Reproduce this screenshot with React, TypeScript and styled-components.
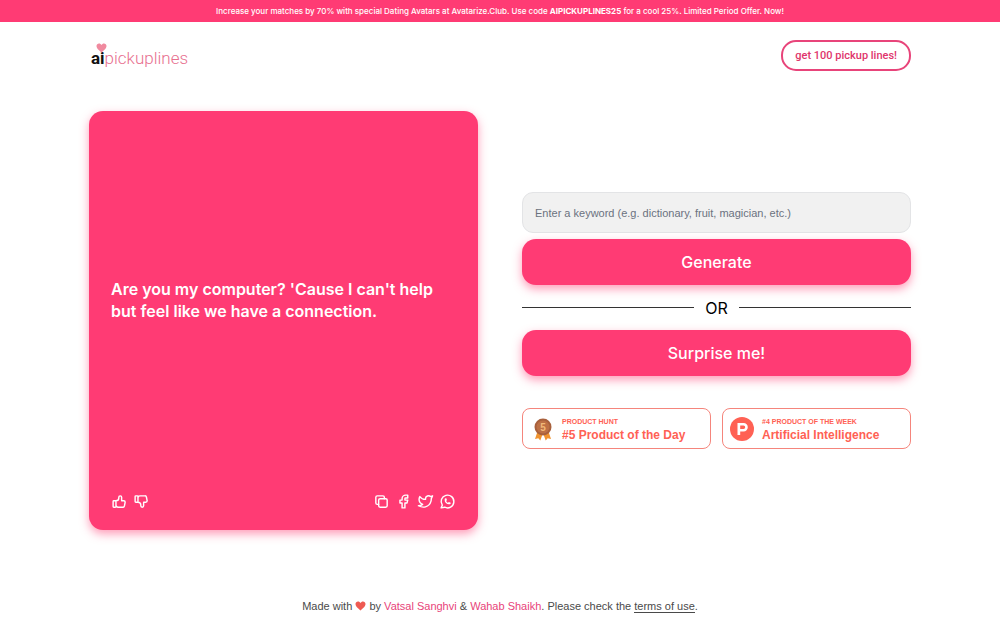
import React from "react";
import styled, { createGlobalStyle } from "styled-components";
import {
  TbBrandFacebook,
  TbBrandTwitter,
  TbBrandWhatsapp,
  TbThumbDown,
  TbThumbUp,
} from "react-icons/tb";

const PINK = "#ff3b74";
const CORAL = "#ff6154";
const SMALL_TEXT = `"Liberation Sans", sans-serif`;

const GlobalStyle = createGlobalStyle`
  *, *::before, *::after { box-sizing: border-box; }
  body {
    margin: 0;
    background: #fff;
    color: #000;
    font-family: Inter, "Liberation Sans", sans-serif;
  }
  a { color: inherit; text-decoration: none; }
  button, input { font: inherit; }
  button { cursor: pointer; }
`;

const Page = styled.div`
  display: flex;
  flex-direction: column;
  min-height: 100vh;
`;

const Banner = styled.div`
  padding: 5px 16px 4px;
  background: ${PINK};
  color: #fff;
  font-size: 8px;
  font-weight: 500;
  line-height: 13px;
  text-align: center;

  strong { font-weight: 700; }
`;

const Header = styled.header`
  display: flex;
  align-items: center;
  justify-content: space-between;
  padding: 18px 89px;
`;

const Logo = styled.a`
  position: relative;
  padding: 4px 0 0 2px;
  font-family: Roboto, sans-serif;
  font-size: 17px;
  font-weight: 300;
  line-height: 24px;
  color: #e8708f;

  b { font-weight: 700; color: #111; }
`;

const LogoHeart = styled.svg`
  position: absolute;
  top: 1px;
  left: 7px;
  width: 11px;
  height: 10px;
`;

const OutlineButton = styled.button`
  height: 31px;
  padding: 0 12px;
  border: 2px solid #e8447a;
  border-radius: 15px;
  background: #fff;
  color: #e0356c;
  font-family: Roboto, sans-serif;
  font-size: 11px;
  font-weight: 500;
`;

const Main = styled.main`
  display: grid;
  grid-template-columns: 1fr 1fr;
  gap: 44px;
  padding: 22px 89px 0;
`;

const Card = styled.section`
  display: flex;
  flex-direction: column;
  gap: 26px;
  min-height: 67vh;
  padding: 22px 22px 20px;
  border-radius: 14px;
  background: ${PINK};
  color: #fff;
  box-shadow: 0 4px 10px rgba(255, 59, 116, 0.5);
`;

const Line = styled.p`
  display: flex;
  flex: 1;
  align-items: center;
  margin: 0;
  font-size: 16px;
  font-weight: 600;
  line-height: 22px;
`;

const Actions = styled.div`
  display: flex;
  justify-content: space-between;
`;

const IconGroup = styled.div`
  display: flex;
  gap: 5px;
`;

const IconButton = styled.button`
  display: flex;
  padding: 0;
  border: 0;
  background: none;
  color: #fff;

  svg { width: 17px; height: 17px; }
`;

const Panel = styled.section`
  display: flex;
  flex-direction: column;
  justify-content: center;
  padding-top: 1px;
`;

const Form = styled.form`
  display: flex;
  flex-direction: column;
  gap: 6px;
`;

const KeywordInput = styled.input`
  height: 41px;
  padding: 0 12px;
  border: 1px solid #e3e4e6;
  border-radius: 11px;
  background: #f1f1f1;
  color: #111;
  font-family: ${SMALL_TEXT};
  font-size: 11px;

  &::placeholder { color: #6b7280; opacity: 1; }
`;

const PrimaryButton = styled.button`
  height: 46px;
  border: 0;
  border-radius: 14px;
  background: ${PINK};
  color: #fff;
  font-size: 16px;
  font-weight: 500;
  box-shadow: 0 4px 10px rgba(255, 59, 116, 0.5);
`;

const Divider = styled.div`
  display: flex;
  align-items: center;
  gap: 11px;
  height: 45px;
  font-size: 16px;

  &::before, &::after {
    content: "";
    flex: 1;
    height: 1px;
    background: #333;
  }
`;

const Badges = styled.div`
  display: grid;
  grid-template-columns: 1fr 1fr;
  gap: 11px;
  margin-top: 32px;
`;

const Badge = styled.a`
  display: flex;
  align-items: center;
  gap: 8px;
  height: 41px;
  padding: 0 7px;
  border: 1px solid #f5857c;
  border-radius: 8px;
  color: ${CORAL};
  font-family: "Liberation Sans", sans-serif;
  font-weight: 700;
  white-space: nowrap;

  svg { width: 24px; height: 24px; flex: none; }
`;

const BadgeText = styled.span`
  display: flex;
  flex-direction: column;
`;

const BadgeLabel = styled.small`
  font-size: 7px;
  line-height: 12px;
`;

const BadgeTitle = styled.span`
  font-size: 12px;
  line-height: 14px;
`;

const Footer = styled.footer`
  margin-top: auto;
  padding: 0 16px 11px;
  color: #4a4a4a;
  font-family: ${SMALL_TEXT};
  font-size: 11px;
  line-height: 16px;
  text-align: center;
`;

const AuthorLink = styled.a`
  color: #e8437a;
`;

const TermsLink = styled.a`
  border-bottom: 1px solid #4a4a4a;
`;

const FooterHeart = styled.svg`
  width: 11px;
  height: 10px;
  vertical-align: -1px;
`;

const HEART =
  "M12 21 C9 18.5 1 12.5 1 6.8 C1 3.4 3.5 1 6.5 1 C8.9 1 11 2.4 12 4.6 C13 2.4 15.1 1 17.5 1 C20.5 1 23 3.4 23 6.8 C23 12.5 15 18.5 12 21 Z";

function CopyIcon() {
  return (
    <svg viewBox="0 0 24 24" fill="none" stroke="currentColor" strokeWidth="2" strokeLinecap="round" strokeLinejoin="round" aria-hidden="true">
      <rect x="8" y="8" width="12" height="12" rx="2" />
      <path d="M16 8V6a2 2 0 0 0-2-2H6a2 2 0 0 0-2 2v8a2 2 0 0 0 2 2h2" />
    </svg>
  );
}

function Medal() {
  return (
    <svg viewBox="0 0 24 24" aria-hidden="true">
      <path d="M8 13 L5 22 L8.3 21.2 L10.3 23.5 L13 16 L15.7 23.5 L17.7 21.2 L21 22 L18 13 Z" fill="#f0932f" />
      <circle cx="13" cy="10" r="8.5" fill="#a8603c" />
      <circle cx="13" cy="10" r="6.5" fill="#bd7045" />
      <text x="13" y="13.5" fontSize="10" textAnchor="middle" fill="#f2b878">5</text>
    </svg>
  );
}

function ProductMark() {
  return (
    <svg viewBox="0 0 24 24" aria-hidden="true">
      <circle cx="12" cy="12" r="12" fill={CORAL} />
      <path
        fill="#fff"
        fillRule="evenodd"
        d="M7.5 6h6.1a4.2 4.2 0 0 1 0 8.4h-3.4V18H7.500zm2.700 2.500v3.400h3.300a1.700 1.700 0 0 0 0-3.400z"
      />
    </svg>
  );
}

export default function App() {
  return (
    <>
      <GlobalStyle />
      <Page>
        <Banner>
          Increase your matches by 70% with special Dating Avatars at Avatarize.Club. Use code{" "}
          <strong>AIPICKUPLINES25</strong> for a cool 25%. Limited Period Offer. Now!
        </Banner>
        <Header>
          <Logo href="#">
            <LogoHeart viewBox="0 0 24 22" aria-hidden="true">
              <path d={HEART} fill="#f08a9f" />
            </LogoHeart>
            <b>ai</b>pickuplines
          </Logo>
          <OutlineButton type="button">get 100 pickup lines!</OutlineButton>
        </Header>
        <Main>
          <Card>
            <Line>Are you my computer? 'Cause I can't help but feel like we have a connection.</Line>
            <Actions>
              <IconGroup>
                <IconButton type="button" aria-label="Like"><TbThumbUp /></IconButton>
                <IconButton type="button" aria-label="Dislike"><TbThumbDown /></IconButton>
              </IconGroup>
              <IconGroup>
                <IconButton type="button" aria-label="Copy"><CopyIcon /></IconButton>
                <IconButton type="button" aria-label="Share on Facebook"><TbBrandFacebook /></IconButton>
                <IconButton type="button" aria-label="Share on Twitter"><TbBrandTwitter /></IconButton>
                <IconButton type="button" aria-label="Share on WhatsApp"><TbBrandWhatsapp /></IconButton>
              </IconGroup>
            </Actions>
          </Card>
          <Panel>
            <Form onSubmit={(event) => event.preventDefault()}>
              <KeywordInput
                type="text"
                aria-label="Keyword"
                placeholder="Enter a keyword (e.g. dictionary, fruit, magician, etc.)"
              />
              <PrimaryButton type="submit">Generate</PrimaryButton>
            </Form>
            <Divider>OR</Divider>
            <PrimaryButton type="button">Surprise me!</PrimaryButton>
            <Badges>
              <Badge href="#">
                <Medal />
                <BadgeText>
                  <BadgeLabel>PRODUCT HUNT</BadgeLabel>
                  <BadgeTitle>#5 Product of the Day</BadgeTitle>
                </BadgeText>
              </Badge>
              <Badge href="#">
                <ProductMark />
                <BadgeText>
                  <BadgeLabel>#4 PRODUCT OF THE WEEK</BadgeLabel>
                  <BadgeTitle>Artificial Intelligence</BadgeTitle>
                </BadgeText>
              </Badge>
            </Badges>
          </Panel>
        </Main>
        <Footer>
          Made with{" "}
          <FooterHeart viewBox="0 0 24 22" role="img" aria-label="love">
            <path d={HEART} fill="#ee5a52" />
          </FooterHeart>{" "}
          by <AuthorLink href="#">Vatsal Sanghvi</AuthorLink> &amp;{" "}
          <AuthorLink href="#">Wahab Shaikh</AuthorLink>. Please check the{" "}
          <TermsLink href="#">terms of use</TermsLink>.
        </Footer>
      </Page>
    </>
  );
}
